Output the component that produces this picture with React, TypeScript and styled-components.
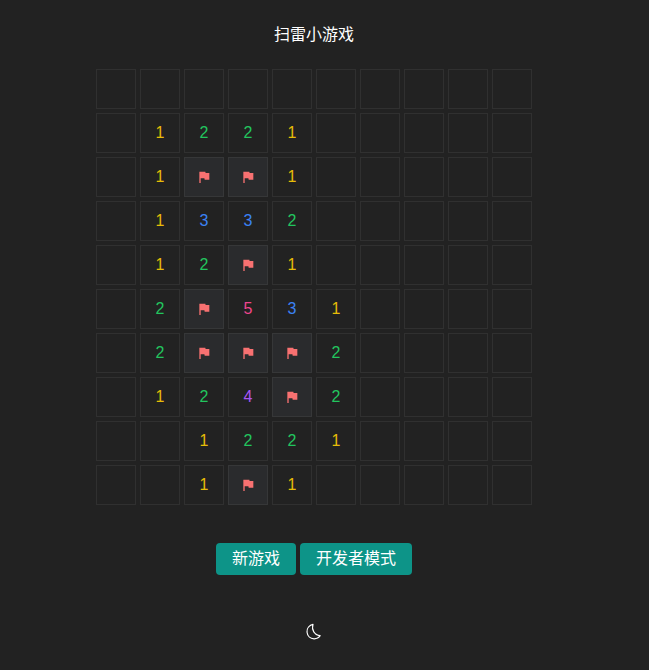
import React from 'react';
import styled, { createGlobalStyle } from 'styled-components';

const GlobalStyle = createGlobalStyle`
  *, *::before, *::after { box-sizing: border-box; }
  body {
    margin: 0;
    background: #222;
    color: #fff;
    font: 16px/24px "Liberation Sans", "Noto Sans CJK SC", sans-serif;
  }
`;

const Page = styled.main`
  width: 628px;
  height: 670px;
  padding-top: 23px;
  display: flex;
  flex-direction: column;
  align-items: center;
`;

const Title = styled.h1`
  margin: 0 0 22px;
  font-size: 16px;
  font-weight: 400;
  line-height: 24px;
`;

const Board = styled.div`
  display: grid;
  grid-template-columns: repeat(10, 40px);
  grid-auto-rows: 40px;
  gap: 4px;
`;

const numberColors: Record<string, string> = {
  '1': '#e6bd08',
  '2': '#22c55e',
  '3': '#3b82f6',
  '4': '#a855f7',
  '5': '#f0468f',
  F: '#f87171',
};

const Cell = styled.div<{ $value: string }>`
  display: flex;
  align-items: center;
  justify-content: center;
  border: 1px solid ${(p) => (p.$value === 'F' ? '#363738' : '#303030')};
  background: ${(p) => (p.$value === 'F' ? '#2a2b2d' : 'transparent')};
  color: ${(p) => numberColors[p.$value] ?? 'inherit'};
`;

const Actions = styled.div`
  display: flex;
  gap: 4px;
  margin-top: 38px;
`;

const ActionButton = styled.button`
  height: 32px;
  padding: 0 16px;
  border: 0;
  border-radius: 4px;
  background: #0d9488;
  color: #fff;
  font: inherit;
  cursor: pointer;
`;

const ThemeButton = styled.button`
  display: flex;
  margin-top: 47px;
  padding: 0;
  border: 0;
  background: none;
  color: #fff;
  cursor: pointer;
`;

const FlagIcon = () => (
  <svg width="16" height="16" viewBox="0 0 24 24" fill="currentColor">
    <path d="M14.4 6L14 4H5v17h2v-7h5.6l.4 2h7V6z" />
  </svg>
);

const MoonIcon = () => (
  <svg width="19.2" height="19.2" viewBox="0 0 32 32" fill="currentColor">
    <path d="M13.502 5.414a15.075 15.075 0 0 0 11.594 18.194a11.1 11.1 0 0 1-7.975 3.39c-.138 0-.278.005-.418 0a11.094 11.094 0 0 1-3.2-21.584M14.98 3a1 1 0 0 0-.175.016a13.096 13.096 0 0 0 1.825 25.981c.164.006.328 0 .49 0a13.07 13.07 0 0 0 10.703-5.555a1.01 1.01 0 0 0-.783-1.565A13.08 13.08 0 0 1 15.89 4.38A1.015 1.015 0 0 0 14.98 3" />
  </svg>
);

const rows = [
  '..........',
  '.1221.....',
  '.1FF1.....',
  '.1332.....',
  '.12F1.....',
  '.2F531....',
  '.2FFF2....',
  '.124F2....',
  '..1221....',
  '..1F1.....',
];

export default function App() {
  return (
    <>
      <GlobalStyle />
      <Page>
        <Title>扫雷小游戏</Title>
        <Board>
          {rows.flatMap((row, y) =>
            row.split('').map((value, x) => (
              <Cell key={`${y}-${x}`} $value={value}>
                {value === 'F' ? <FlagIcon /> : value === '.' ? null : value}
              </Cell>
            )),
          )}
        </Board>
        <Actions>
          <ActionButton>新游戏</ActionButton>
          <ActionButton>开发者模式</ActionButton>
        </Actions>
        <ThemeButton aria-label="切换主题">
          <MoonIcon />
        </ThemeButton>
      </Page>
    </>
  );
}
